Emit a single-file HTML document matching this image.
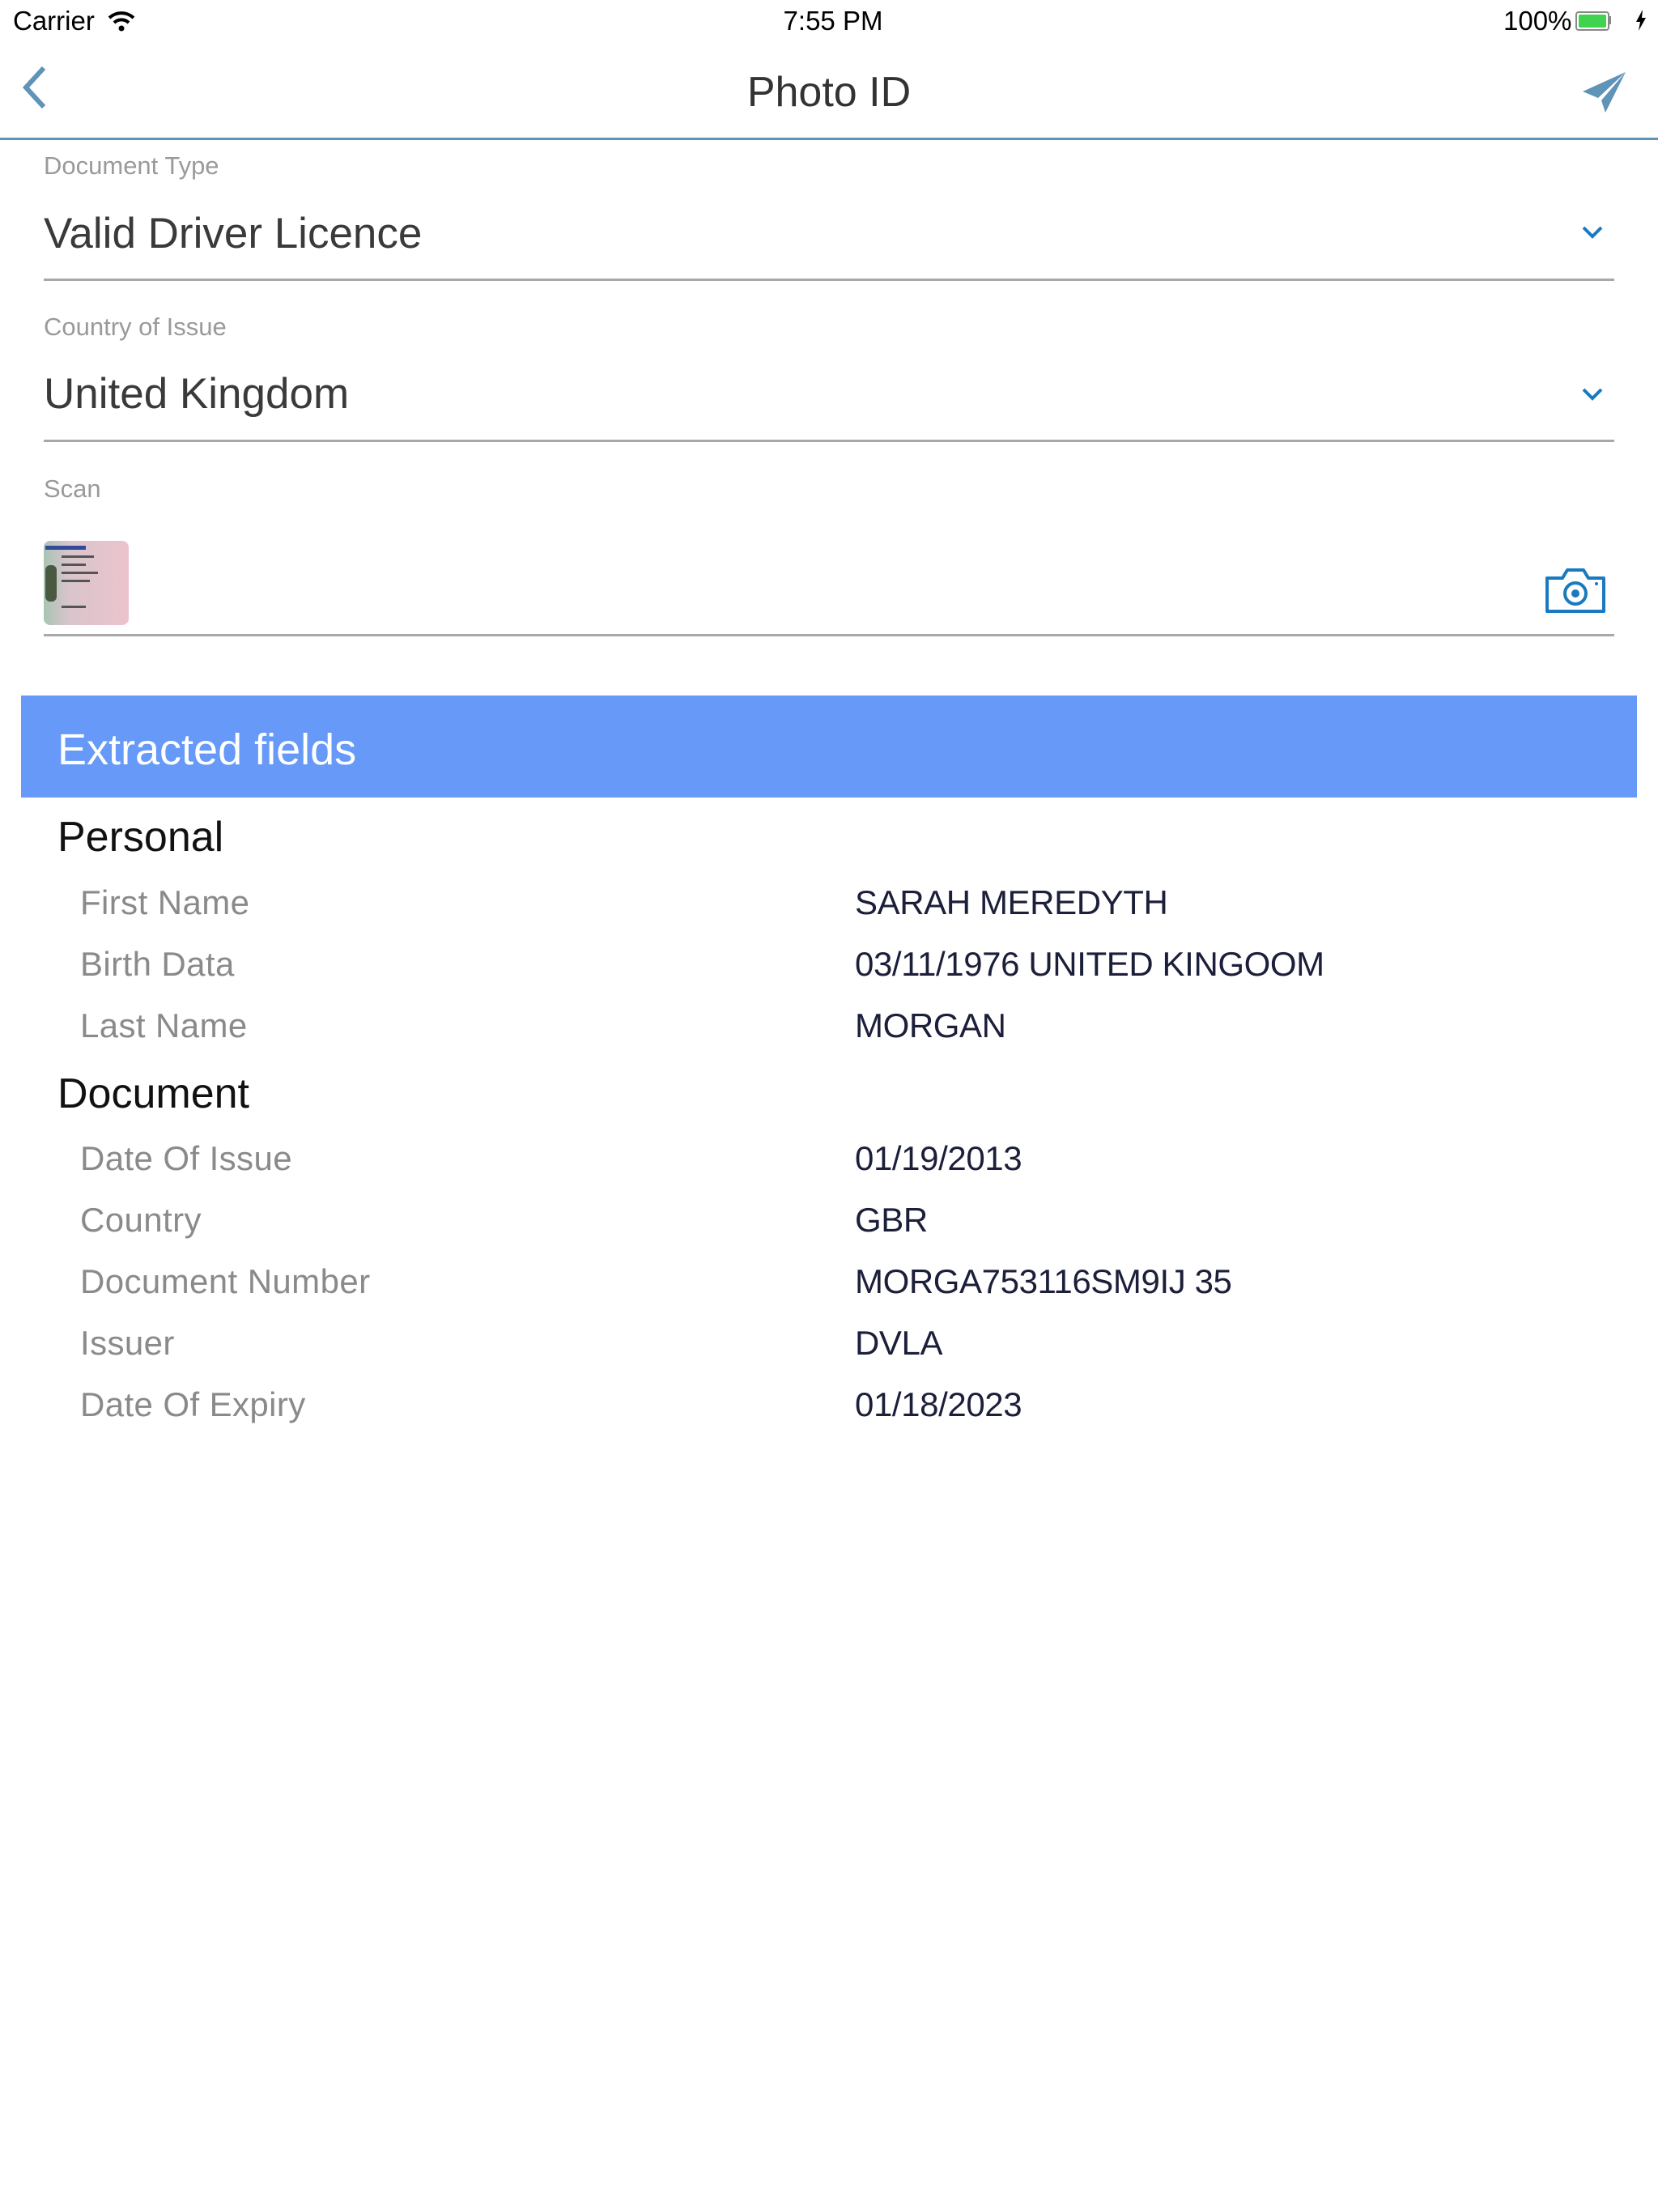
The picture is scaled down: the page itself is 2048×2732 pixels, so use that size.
<!DOCTYPE html>
<html><head><meta charset="utf-8"><style>
html,body{margin:0;padding:0;background:#fff;}
body{width:2048px;height:2732px;position:relative;overflow:hidden;font-family:"Liberation Sans",sans-serif;}
.a{position:absolute;white-space:nowrap;}
.lbl{color:#9a9a9a;font-size:31px;}
.big{color:#3a3a3a;font-size:53px;}
.line{position:absolute;left:54px;width:1940px;height:3px;background:#a8a8a8;}
.k{position:absolute;left:99px;color:#8a8a8a;font-size:42px;letter-spacing:0.4px;}
.v{position:absolute;left:1056px;color:#1c1f3a;font-size:42px;letter-spacing:-0.4px;}
.h{position:absolute;left:71px;color:#111;font-size:52px;}
</style></head><body>
<div class="a" style="left:16px;top:7px;font-size:33px;color:#000">Carrier</div>
<svg class="a" style="left:133px;top:13px" width="34" height="26" viewBox="0 0 34 26"><path d="M2 9 A22 22 0 0 1 32 9" stroke="#000" stroke-width="4" fill="none"/><path d="M8 15 A13 13 0 0 1 26 15" stroke="#000" stroke-width="4" fill="none"/><circle cx="17" cy="22" r="3.5" fill="#000"/></svg>
<div class="a" style="left:0;width:2058px;text-align:center;top:7px;font-size:33px;color:#000">7:55 PM</div>
<div class="a" style="left:1857px;top:7px;font-size:33px;color:#000">100%</div>
<div class="a" style="left:1946px;top:14px;width:38px;height:20px;border:2px solid #888;border-radius:4px;"><div style="margin:2px;height:16px;background:#3fd34f;border-radius:2px"></div></div>
<div class="a" style="left:1987px;top:20px;width:3px;height:10px;background:#888"></div>
<svg class="a" style="left:2020px;top:12px" width="14" height="26" viewBox="0 0 14 26"><path d="M9 0 L1 15 H6 L4 26 L13 10 H8 Z" fill="#000"/></svg>

<svg class="a" style="left:24px;top:80px" width="36" height="56" viewBox="0 0 36 56"><path d="M30 4 L8 28 L30 52" stroke="#5f93b8" stroke-width="6" fill="none"/></svg>
<div class="a" style="left:0;width:2048px;text-align:center;top:84px;font-size:52px;color:#333">Photo ID</div>
<svg class="a" style="left:1950px;top:86px" width="62" height="56" viewBox="1950 86 62 56"><path d="M2008 89 L1955 113 L1974 121 Z" fill="#5f93b8"/><path d="M2008 89 L1978 124 L1983 139 Z" fill="#5f93b8"/></svg>
<div class="a" style="left:0;top:170px;width:2048px;height:3px;background:#5f93b8"></div>

<div class="a lbl" style="left:54px;top:187px">Document Type</div>
<div class="a big" style="left:54px;top:258px">Valid Driver Licence</div>
<svg class="a" style="left:1953px;top:278px" width="28" height="18" viewBox="0 0 28 18"><path d="M3 3 L14 14 L25 3" stroke="#1a7ac0" stroke-width="4" fill="none"/></svg>
<div class="line" style="top:344px"></div>

<div class="a lbl" style="left:54px;top:386px">Country of Issue</div>
<div class="a big" style="left:54px;top:456px">United Kingdom</div>
<svg class="a" style="left:1953px;top:478px" width="28" height="18" viewBox="0 0 28 18"><path d="M3 3 L14 14 L25 3" stroke="#1a7ac0" stroke-width="4" fill="none"/></svg>
<div class="line" style="top:543px"></div>

<div class="a lbl" style="left:54px;top:586px">Scan</div>
<div class="a" style="left:54px;top:668px;width:105px;height:104px;border-radius:8px;background:linear-gradient(90deg,#a9c4b4 0%,#d9c5cc 30%,#ecc3cc 100%);overflow:hidden">
<div style="position:absolute;left:2px;top:6px;width:50px;height:5px;background:#334a9a"></div>
<div style="position:absolute;left:2px;top:30px;width:14px;height:45px;background:#4a5a40;border-radius:6px"></div>
<div style="position:absolute;left:22px;top:18px;width:40px;height:3px;background:#555"></div>
<div style="position:absolute;left:22px;top:28px;width:30px;height:3px;background:#555"></div>
<div style="position:absolute;left:22px;top:38px;width:45px;height:3px;background:#555"></div>
<div style="position:absolute;left:22px;top:48px;width:35px;height:3px;background:#555"></div>
<div style="position:absolute;left:22px;top:80px;width:30px;height:3px;background:#555"></div>
</div>
<svg class="a" style="left:1908px;top:700px" width="76" height="58" viewBox="0 0 76 58"><path d="M3 14 H22 L28 4 H48 L54 14 H73 V55 H3 Z" stroke="#1a7ac0" stroke-width="4" fill="none" stroke-linejoin="round"/><circle cx="38" cy="33" r="13" stroke="#1a7ac0" stroke-width="4" fill="none"/><circle cx="38" cy="33" r="5" fill="#1a7ac0"/><circle cx="64" cy="21" r="2" fill="#1a7ac0"/></svg>
<div class="line" style="top:783px"></div>

<div class="a" style="left:26px;top:859px;width:1996px;height:126px;background:#6699f8"></div>
<div class="a" style="left:71px;top:895px;font-size:54px;color:#fff">Extracted fields</div>

<div class="h" style="top:1004px">Personal</div>
<div class="k" style="top:1091px">First Name</div><div class="v" style="top:1091px">SARAH MEREDYTH</div>
<div class="k" style="top:1167px">Birth Data</div><div class="v" style="top:1167px">03/11/1976 UNITED KINGOOM</div>
<div class="k" style="top:1243px">Last Name</div><div class="v" style="top:1243px">MORGAN</div>
<div class="h" style="top:1321px">Document</div>
<div class="k" style="top:1407px">Date Of Issue</div><div class="v" style="top:1407px">01/19/2013</div>
<div class="k" style="top:1483px">Country</div><div class="v" style="top:1483px">GBR</div>
<div class="k" style="top:1559px">Document Number</div><div class="v" style="top:1559px">MORGA753116SM9IJ 35</div>
<div class="k" style="top:1635px">Issuer</div><div class="v" style="top:1635px">DVLA</div>
<div class="k" style="top:1711px">Date Of Expiry</div><div class="v" style="top:1711px">01/18/2023</div>
</body></html>
